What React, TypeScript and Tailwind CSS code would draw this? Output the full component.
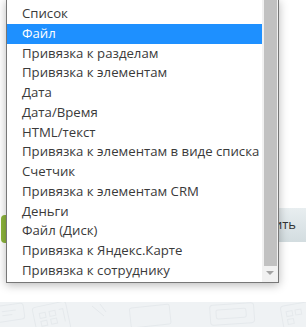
import React from 'react';

const items = [
  'Список',
  'Файл',
  'Привязка к разделам',
  'Привязка к элементам',
  'Дата',
  'Дата/Время',
  'HTML/текст',
  'Привязка к элементам в виде списка',
  'Счетчик',
  'Привязка к элементам CRM',
  'Деньги',
  'Файл (Диск)',
  'Привязка к Яндекс.Карте',
  'Привязка к сотруднику',
];

function Doodles() {
  return (
    <svg width="306" height="25" viewBox="0 0 306 25" fill="none" stroke="#e5e9ec" strokeWidth="1">
      <g transform="rotate(-8 15 10)">
        <rect x="-4" y="2" width="28" height="16" rx="3" />
        <path d="M2 8h14M2 12h10" />
      </g>
      <g transform="rotate(-12 52 14)">
        <rect x="34" y="2" width="34" height="28" rx="3" />
        <path d="M40 9h6v5h-6zM50 9h6v5h-6zM40 17h6v5h-6zM50 17h6v5h-6zM60 9h4v13" />
      </g>
      <path d="M92 4l12 10M100 2l6 8" />
      <g transform="rotate(-6 150 12)">
        <rect x="130" y="4" width="40" height="20" rx="2" />
      </g>
      <g transform="rotate(-4 232 10)">
        <rect x="210" y="2" width="44" height="20" rx="3" />
        <rect x="216" y="7" width="30" height="9" rx="2" />
      </g>
      <g transform="rotate(-10 296 14)">
        <rect x="282" y="2" width="30" height="28" rx="3" />
        <path d="M287 8h6v5h-6zM296 8h6v5h-6zM287 16h6v5h-6z" />
      </g>
    </svg>
  );
}

export default function App() {
  return (
    <div className="relative w-[306px] h-[327px] overflow-hidden bg-white font-['Open_Sans',sans-serif]">
      {/* Page behind the dropdown */}
      <div className="flex flex-col h-full">
        <div className="h-[302px] bg-white flex items-start justify-between pt-[208px]">
          <button className="mt-[7px] ml-[1px] h-[28px] w-[120px] rounded-[4px] bg-[#8cb43b]" />
          <button className="h-[34px] pl-[10px] pr-[10px] bg-gradient-to-b from-[#e8eef0] to-[#d3dde0] text-[13px] text-[#333] rounded-l-[3px]">
            Отменить
          </button>
        </div>
        <div className="flex-1 bg-[#eff2f4]">
          <Doodles />
        </div>
      </div>

      {/* Dropdown list */}
      <div className="absolute left-[6px] top-[-1px] w-[273px] h-[284px] border border-[#777] bg-white shadow-[0_2px_9px_rgba(0,0,0,0.28)] flex">
        <ul className="flex-1 pt-[4px]">
          {items.map((item) => (
            <li
              key={item}
              className={
                'h-[19.75px] leading-[19.75px] pl-[15px] text-[13.2px] whitespace-nowrap ' +
                (item === 'Файл' ? 'bg-[#1e90ff] text-white' : 'text-[#3a3a3a]')
              }
            >
              {item}
            </li>
          ))}
        </ul>
        <div className="w-[16px] bg-[#f1f1f1] flex flex-col items-center">
          <div className="w-[13px] h-[266px] bg-[#c1c1c1]" />
          <div className="mt-[5px] w-0 h-0 border-l-[4px] border-r-[4px] border-t-[4px] border-l-transparent border-r-transparent border-t-[#a3a3a3]" />
        </div>
      </div>
    </div>
  );
}
